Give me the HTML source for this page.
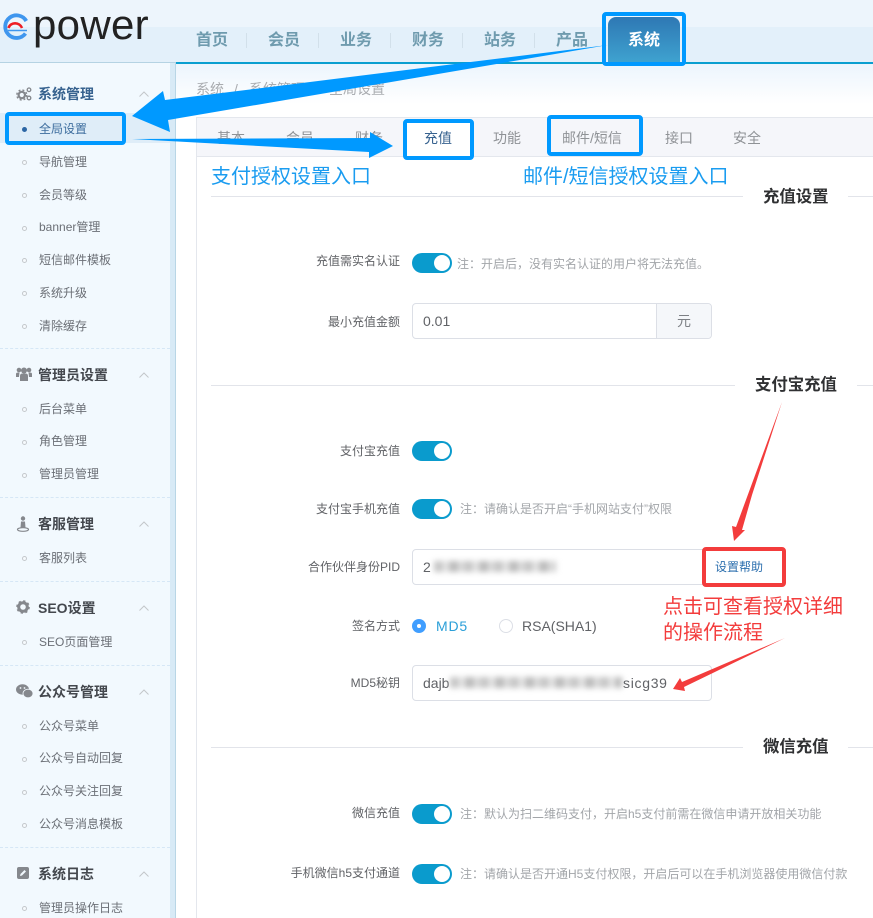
<!DOCTYPE html>
<html lang="zh"><head><meta charset="utf-8"><title>系统设置</title>
<style>
*{box-sizing:border-box}
html,body{margin:0;padding:0}
body{width:873px;height:918px;position:relative;overflow:hidden;background:#fff;font-family:"Liberation Sans","Noto Sans CJK SC",sans-serif;color:#606266}
.a,.s,.h,.d,.l,.n,.sw,.ib,.sec,.ln{position:absolute}
.a{white-space:nowrap}
.s{left:39px;font-size:12px;line-height:16px;color:#6b6f76;white-space:nowrap}
.h{left:38px;font-size:14px;line-height:18px;font-weight:700;color:#44484e;white-space:nowrap}
.d{left:22px;width:5px;height:5px;border:1px solid #c4c8cc;border-radius:50%;background:#f6fafd}
.ch{position:absolute;left:139px;width:10px;height:6px}
.div{position:absolute;left:0;width:170px;border-top:1px dashed #d6e7f6}
.n{top:30px;font-size:16px;line-height:22px;font-weight:700;color:#6f9bae}
.sep{position:absolute;top:33px;width:1px;height:15px;background:#d2e0ea}
.tab{position:absolute;top:129px;font-size:14px;line-height:18px;color:#8f9296;white-space:nowrap}
.l{font-size:12px;line-height:16px;color:#606266;text-align:right;right:473px;white-space:nowrap}
.sw{left:412px;width:40px;height:20px;border-radius:10px;background:#0a9bcd}
.sw:after{content:"";position:absolute;right:2px;top:2px;width:16px;height:16px;border-radius:50%;background:#fff}
.note{position:absolute;left:460px;font-size:12px;line-height:16px;color:#a2a5a9;white-space:nowrap}
.ib{left:412px;height:36px;border:1px solid #dcdfe6;border-radius:4px;background:#fff}
.sec{font-size:16.4px;line-height:20px;font-weight:700;color:#303133;white-space:nowrap}
.ln{height:1px;background:#e2e4ea}
.blur{position:absolute;height:11px;filter:blur(3px);background:repeating-linear-gradient(90deg,#c6c6c6 0 9px,#e6e6e6 9px 15px,#bbb 15px 24px,#dcdcdc 24px 30px)}
.bb{position:absolute;border:4px solid #0099ff;border-radius:4px}
svg.over{position:absolute;left:0;top:0;pointer-events:none}
</style></head><body>

<!-- header -->
<div class="a" style="left:0;top:0;width:873px;height:27px;background:#edf5fc"></div>
<div class="a" style="left:0;top:27px;width:873px;height:35px;background:#e3f0fa"></div>
<div class="a" style="left:176px;top:62px;width:697px;height:2px;background:#0a9fd0"></div>
<div class="a" style="left:0;top:62px;width:176px;height:1px;background:#b5d3e3"></div>
<div class="a" style="left:176px;top:64px;width:697px;height:40px;background:linear-gradient(#ecf5fd,#fff)"></div>

<!-- logo -->
<svg class="a" style="left:0;top:10px" width="32" height="32" viewBox="0 0 32 32"><path d="M25.500 23.500A11.300 11.300 0 1 1 26.300 11" fill="none" stroke="#3f96ee" stroke-width="3.800"/><path d="M8 20.500H27" stroke="#3f96ee" stroke-width="1.600" fill="none"/><path d="M8.500 18C10.500 11.800 19.500 11.800 22 18" fill="none" stroke="#ee1d23" stroke-width="2.600"/></svg>
<div class="a" style="left:33px;top:2px;font-size:42px;line-height:46px;color:#222;letter-spacing:.3px">power</div>

<div class="n" style="left:196px">首页</div><div class="sep" style="left:246px"></div>
<div class="n" style="left:268px">会员</div><div class="sep" style="left:318px"></div>
<div class="n" style="left:340px">业务</div><div class="sep" style="left:390px"></div>
<div class="n" style="left:412px">财务</div><div class="sep" style="left:462px"></div>
<div class="n" style="left:484px">站务</div><div class="sep" style="left:534px"></div>
<div class="n" style="left:556px">产品</div>
<div class="a" style="left:608px;top:17px;width:72px;height:46px;border-radius:8px 8px 0 0;background:linear-gradient(#2e78b4,#3fa3d0)"></div>
<div class="n" style="left:628px;color:#fff">系统</div>

<!-- sidebar -->
<div class="a" style="left:0;top:63px;width:170px;height:855px;background:#f2f9fe"></div>
<div class="a" style="left:170px;top:63px;width:5px;height:855px;background:#d8eaf6"></div>
<div class="a" style="left:175px;top:63px;width:1px;height:855px;background:#b9d6e6"></div>
<div class="a" style="left:0;top:113px;width:170px;height:30px;background:#dfedf8"></div>

<svg class="a" style="left:16px;top:86px" width="16" height="16" viewBox="0 0 16 16" fill="none" stroke="#85888d"><circle cx="5.800" cy="9" r="3.200" stroke-width="2.200"/><circle cx="5.800" cy="9" r="5" stroke-width="1.400" stroke-dasharray="2 2"/><circle cx="13" cy="3.800" r="1.800" stroke-width="1.300"/><circle cx="13" cy="12" r="1.800" stroke-width="1.300"/></svg>
<div class="h" style="top:85px;color:#37628f">系统管理</div>
<svg class="ch" style="top:91px" viewBox="0 0 10 6"><path d="M.5 5.500 5 1l4.500 4.500" fill="none" stroke="#c3c6ca"/></svg>
<div class="a" style="left:22px;top:127px;width:5px;height:5px;border-radius:50%;background:#2c66a4"></div>
<div class="s" style="top:121px;color:#3d6d9e">全局设置</div>
<div class="d" style="top:160px"></div><div class="s" style="top:154px">导航管理</div>
<div class="d" style="top:193px"></div><div class="s" style="top:187px">会员等级</div>
<div class="d" style="top:226px"></div><div class="s" style="top:219px">banner管理</div>
<div class="d" style="top:258px"></div><div class="s" style="top:252px">短信邮件模板</div>
<div class="d" style="top:291px"></div><div class="s" style="top:285px">系统升级</div>
<div class="d" style="top:324px"></div><div class="s" style="top:318px">清除缓存</div>
<div class="div" style="top:348px"></div>

<svg class="a" style="left:16px;top:367px" width="16" height="15" viewBox="0 0 16 15" fill="#85888d"><circle cx="3" cy="3" r="2.300"/><circle cx="13" cy="3" r="2.300"/><circle cx="8" cy="3.500" r="3"/><path d="M0 10V7q0-1.500 2-1.500h1.500L3 10zM16 10V7q0-1.500-2-1.500h-1.500l.5 4.500zM4 14V9q0-2.500 2.500-2.500h3Q12 6.500 12 9v5z"/></svg>
<div class="h" style="top:366px">管理员设置</div>
<svg class="ch" style="top:372px" viewBox="0 0 10 6"><path d="M.5 5.500 5 1l4.500 4.500" fill="none" stroke="#c3c6ca"/></svg>
<div class="d" style="top:407px"></div><div class="s" style="top:401px">后台菜单</div>
<div class="d" style="top:440px"></div><div class="s" style="top:433px">角色管理</div>
<div class="d" style="top:473px"></div><div class="s" style="top:466px">管理员管理</div>
<div class="div" style="top:497px"></div>

<svg class="a" style="left:16px;top:516px" width="16" height="16" viewBox="0 0 16 16" fill="#85888d"><circle cx="7" cy="2.500" r="2.200"/><path d="M5 5.500h4l.5 6h-5z"/><ellipse cx="7" cy="13.500" rx="5.500" ry="1.800" fill="none" stroke="#85888d" stroke-width="1.200"/></svg>
<div class="h" style="top:515px">客服管理</div>
<svg class="ch" style="top:521px" viewBox="0 0 10 6"><path d="M.5 5.500 5 1l4.500 4.500" fill="none" stroke="#c3c6ca"/></svg>
<div class="d" style="top:556px"></div><div class="s" style="top:550px">客服列表</div>
<div class="div" style="top:581px"></div>

<svg class="a" style="left:16px;top:600px" width="14" height="14" viewBox="0 0 14 14"><circle cx="7" cy="7" r="4.300" fill="none" stroke="#85888d" stroke-width="3"/><circle cx="7" cy="7" r="6" fill="none" stroke="#85888d" stroke-width="1.600" stroke-dasharray="2.300 2.400"/></svg>
<div class="h" style="top:599px">SEO设置</div>
<svg class="ch" style="top:605px" viewBox="0 0 10 6"><path d="M.5 5.500 5 1l4.500 4.500" fill="none" stroke="#c3c6ca"/></svg>
<div class="d" style="top:640px"></div><div class="s" style="top:634px">SEO页面管理</div>
<div class="div" style="top:665px"></div>

<svg class="a" style="left:16px;top:684px" width="17" height="15" viewBox="0 0 17 15" fill="#85888d"><ellipse cx="6.500" cy="5.500" rx="6.500" ry="5.200"/><ellipse cx="12" cy="9.500" rx="5" ry="4.300" stroke="#f2f9fe" stroke-width=".8"/><circle cx="4.500" cy="4" r=".9" fill="#f2f9fe"/><circle cx="8.500" cy="4" r=".9" fill="#f2f9fe"/></svg>
<div class="h" style="top:683px">公众号管理</div>
<svg class="ch" style="top:689px" viewBox="0 0 10 6"><path d="M.5 5.500 5 1l4.500 4.500" fill="none" stroke="#c3c6ca"/></svg>
<div class="d" style="top:724px"></div><div class="s" style="top:718px">公众号菜单</div>
<div class="d" style="top:757px"></div><div class="s" style="top:750px">公众号自动回复</div>
<div class="d" style="top:790px"></div><div class="s" style="top:783px">公众号关注回复</div>
<div class="d" style="top:823px"></div><div class="s" style="top:816px">公众号消息模板</div>
<div class="div" style="top:847px"></div>

<svg class="a" style="left:17px;top:867px" width="12" height="12" viewBox="0 0 12 12"><rect width="12" height="12" rx="2" fill="#85888d"/><path d="M3 9l.5-2L7.500 3 9 4.500 5 8.500z" fill="#f2f9fe"/></svg>
<div class="h" style="top:865px">系统日志</div>
<svg class="ch" style="top:871px" viewBox="0 0 10 6"><path d="M.5 5.500 5 1l4.500 4.500" fill="none" stroke="#c3c6ca"/></svg>
<div class="d" style="top:906px"></div><div class="s" style="top:900px">管理员操作日志</div>

<!-- breadcrumb -->
<div class="a" style="left:196px;top:80px;font-size:14px;line-height:18px;color:#a9acb0">系统</div>
<div class="a" style="left:234px;top:80px;font-size:14px;line-height:18px;color:#a9acb0">/</div>
<div class="a" style="left:249px;top:80px;font-size:14px;line-height:18px;color:#a9acb0">系统管理</div>
<div class="a" style="left:329px;top:80px;font-size:14px;line-height:18px;color:#a9acb0">全局设置</div>

<!-- card -->
<div class="a" style="left:196px;top:117px;width:677px;height:801px;border:1px solid #e4e7ed;border-right:0;border-bottom:0;background:#fff"></div>
<div class="a" style="left:197px;top:118px;width:676px;height:39px;background:#f5f6fa;border-bottom:1px solid #e4e7ed"></div>
<div class="tab" style="left:217px">基本</div>
<div class="tab" style="left:286px">会员</div>
<div class="tab" style="left:355px">财务</div>
<div class="a" style="left:407px;top:122px;width:64px;height:35px;background:#fff"></div>
<div class="tab" style="left:424px;color:#37628f">充值</div>
<div class="tab" style="left:493px">功能</div>
<div class="tab" style="left:562px">邮件/短信</div>
<div class="tab" style="left:665px">接口</div>
<div class="tab" style="left:733px">安全</div>

<div class="a" style="left:211px;top:164px;font-size:20px;line-height:26px;color:#1a9cf0">支付授权设置入口</div>
<div class="a" style="left:523px;top:164px;font-size:20px;line-height:26px;color:#1a9cf0">邮件/短信授权设置入口</div>

<!-- section 1 -->
<div class="ln" style="left:211px;top:196px;width:532px"></div><div class="ln" style="left:848px;top:196px;width:25px"></div>
<div class="sec" style="left:763px;top:187px">充值设置</div>

<div class="l" style="top:253px">充值需实名认证</div>
<div class="sw" style="top:253px"></div>
<div class="note" style="left:457px;top:256px">注：开启后，没有实名认证的用户将无法充值。</div>

<div class="l" style="top:314px">最小充值金额</div>
<div class="ib" style="top:303px;width:300px"></div>
<div class="a" style="left:656px;top:304px;width:55px;height:34px;background:#f5f7fa;border-left:1px solid #dcdfe6;border-radius:0 4px 4px 0;font-size:14px;line-height:34px;text-align:center;color:#7d8085">元</div>
<div class="a" style="left:423px;top:311px;font-size:14px;line-height:20px;color:#606266">0.01</div>

<!-- section 2 -->
<div class="ln" style="left:211px;top:385px;width:524px"></div><div class="ln" style="left:857px;top:385px;width:16px"></div>
<div class="sec" style="left:755px;top:375px">支付宝充值</div>

<div class="l" style="top:443px">支付宝充值</div>
<div class="sw" style="top:441px"></div>

<div class="l" style="top:501px">支付宝手机充值</div>
<div class="sw" style="top:499px"></div>
<div class="note" style="top:501px">注：请确认是否开启“手机网站支付”权限</div>

<div class="l" style="top:559px">合作伙伴身份PID</div>
<div class="ib" style="top:549px;width:300px"></div>
<div class="a" style="left:423px;top:557px;font-size:14px;line-height:20px;color:#606266">2</div>
<div class="blur" style="left:434px;top:561px;width:122px"></div>
<div class="a" style="left:704px;top:550px;width:78px;height:34px;background:#fff;border-left:1px solid #dcdfe6"></div>
<div class="a" style="left:715px;top:559px;font-size:12px;line-height:16px;color:#2c6fae">设置帮助</div>

<div class="l" style="top:618px">签名方式</div>
<div class="a" style="left:412px;top:619px;width:14px;height:14px;border-radius:50%;background:#409eff"></div>
<div class="a" style="left:417px;top:624px;width:4px;height:4px;border-radius:50%;background:#fff"></div>
<div class="a" style="left:436px;top:616px;font-size:14px;line-height:20px;letter-spacing:.8px;color:#2b9fd8">MD5</div>
<div class="a" style="left:499px;top:619px;width:14px;height:14px;border-radius:50%;border:1px solid #dcdfe6;background:#fff"></div>
<div class="a" style="left:522px;top:616px;font-size:14px;line-height:20px;color:#606266">RSA(SHA1)</div>

<div class="l" style="top:675px">MD5秘钥</div>
<div class="ib" style="top:665px;width:300px"></div>
<div class="a" style="left:423px;top:673px;font-size:14px;line-height:20px;color:#606266">dajb</div>
<div class="blur" style="left:450px;top:677px;width:172px"></div>
<div class="a" style="left:623px;top:673px;font-size:14px;line-height:20px;letter-spacing:.7px;color:#606266">sicg39</div>

<!-- section 3 -->
<div class="ln" style="left:211px;top:747px;width:532px"></div><div class="ln" style="left:848px;top:747px;width:25px"></div>
<div class="sec" style="left:763px;top:737px">微信充值</div>

<div class="l" style="top:805px">微信充值</div>
<div class="sw" style="top:804px"></div>
<div class="note" style="top:806px">注：默认为扫二维码支付，开启h5支付前需在微信申请开放相关功能</div>

<div class="l" style="top:865px">手机微信h5支付通道</div>
<div class="sw" style="top:864px"></div>
<div class="note" style="top:866px">注：请确认是否开通H5支付权限，开启后可以在手机浏览器使用微信付款</div>

<!-- annotations -->
<div class="bb" style="left:602px;top:12px;width:84px;height:54px"></div>
<div class="bb" style="left:5px;top:112px;width:121px;height:33px"></div>
<div class="bb" style="left:403px;top:119px;width:71px;height:41px"></div>
<div class="bb" style="left:547px;top:115px;width:96px;height:41px"></div>
<div class="bb" style="left:702px;top:547px;width:84px;height:40px;border-color:#f33c3c"></div>

<svg class="over" width="873" height="918" viewBox="0 0 873 918">
<path d="M608 45 165 100 163 91 132 116 170 132 168 120Z" fill="#0099ff"/>
<path d="M132 139 370 138 370 132 393 146 369 158 369 152Z" fill="#0099ff"/>
<path d="M782 402 752 495 742 530 745 530 734 541 732 526 736 527Z" fill="#f33c3c"/>
<path d="M785 638 684 687 685 691 673 689 680 678 682 682Z" fill="#f33c3c"/>
</svg>
<div class="a" style="left:663px;top:594px;font-size:20px;line-height:26px;color:#f33c3c">点击可查看授权详细</div>
<div class="a" style="left:663px;top:620px;font-size:20px;line-height:26px;color:#f33c3c">的操作流程</div>
</body></html>
